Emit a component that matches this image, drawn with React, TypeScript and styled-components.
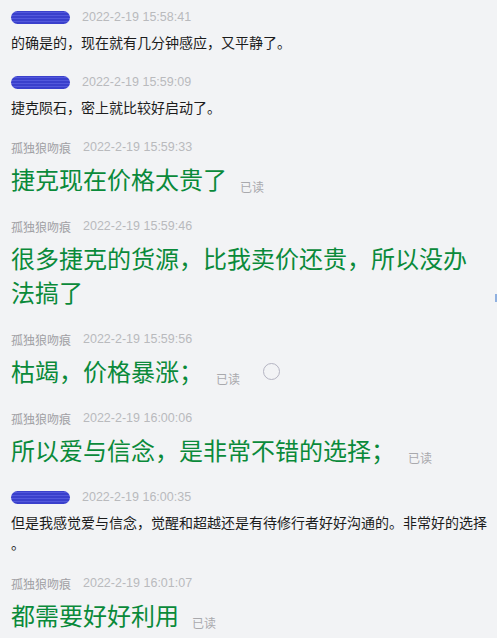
import React from 'react';
import styled, { createGlobalStyle } from 'styled-components';

const GlobalStyle = createGlobalStyle`
  html, body {
    margin: 0;
    padding: 0;
    background: #f2f3f5;
  }
  body {
    font-family: "Liberation Sans", "Noto Sans CJK SC", sans-serif;
  }
`;

const Page = styled.div`
  position: relative;
  width: 497px;
  min-height: 638px;
  box-sizing: border-box;
  padding: 7px 8px 0 11px;
  display: flex;
  flex-direction: column;
  gap: 18px;
  overflow: hidden;
`;

const Message = styled.div`
  display: flex;
  flex-direction: column;
  gap: 5px;
`;

const Header = styled.div`
  display: flex;
  align-items: center;
  gap: 12px;
  height: 20px;
`;

const Scribble = styled.span`
  display: inline-block;
  width: 59px;
  height: 13px;
  border-radius: 7px;
  background:
    repeating-linear-gradient(
      0deg,
      #3a40cc 0px,
      #3a40cc 2px,
      #5258dc 2px,
      #5258dc 3px
    );
`;

const Name = styled.span`
  font-family: "Noto Sans CJK SC", sans-serif;
  font-size: 12px;
  color: #a0a0a4;
`;

const Time = styled.span`
  font-family: "Liberation Sans", sans-serif;
  font-size: 12.5px;
  color: #b9babd;
`;

const Body = styled.div<{ $big?: boolean }>`
  font-family: "Noto Sans CJK SC", sans-serif;
  font-size: ${p => (p.$big ? '24px' : '14px')};
  line-height: ${p => (p.$big ? '34px' : '21px')};
  margin-bottom: ${p => (p.$big ? '2px' : '1px')};
  color: ${p => (p.$big ? '#0a8a3a' : '#1c1c1c')};
  word-break: break-all;
  line-break: anywhere;
`;

const Read = styled.span`
  font-family: "Noto Sans CJK SC", sans-serif;
  font-size: 12px;
  line-height: 12px;
  color: #a9a9ad;
  margin-left: 13px;
  vertical-align: -3px;
`;

const Ring = styled.span`
  display: inline-block;
  width: 15px;
  height: 15px;
  border: 1.5px solid #b4b4c2;
  border-radius: 50%;
  margin-left: 23px;
  vertical-align: 1px;
`;

const EdgeMark = styled.span`
  position: absolute;
  right: 0;
  top: 294px;
  width: 2px;
  height: 8px;
  background: #8fb0e0;
`;

type Msg = {
  who: 'blue' | 'name';
  time: string;
  text: string;
  big?: boolean;
  read?: boolean;
  ring?: boolean;
};

const messages: Msg[] = [
  { who: 'blue', time: '2022-2-19 15:58:41', text: '的确是的，现在就有几分钟感应，又平静了。' },
  { who: 'blue', time: '2022-2-19 15:59:09', text: '捷克陨石，密上就比较好启动了。' },
  { who: 'name', time: '2022-2-19 15:59:33', text: '捷克现在价格太贵了', big: true, read: true },
  { who: 'name', time: '2022-2-19 15:59:46', text: '很多捷克的货源，比我卖价还贵，所以没办法搞了', big: true },
  { who: 'name', time: '2022-2-19 15:59:56', text: '枯竭，价格暴涨；', big: true, read: true, ring: true },
  { who: 'name', time: '2022-2-19 16:00:06', text: '所以爱与信念，是非常不错的选择；', big: true, read: true },
  { who: 'blue', time: '2022-2-19 16:00:35', text: '但是我感觉爱与信念，觉醒和超越还是有待修行者好好沟通的。非常好的选择。' },
  { who: 'name', time: '2022-2-19 16:01:07', text: '都需要好好利用', big: true, read: true },
];

export default function App() {
  return (
    <>
      <GlobalStyle />
      <Page>
        {messages.map((m, i) => (
          <Message key={i}>
            <Header>
              {m.who === 'blue' ? <Scribble /> : <Name>孤独狼吻痕</Name>}
              <Time>{m.time}</Time>
            </Header>
            <Body $big={m.big}>
              {m.text}
              {m.read && <Read>已读</Read>}
              {m.ring && <Ring />}
            </Body>
          </Message>
        ))}
        <EdgeMark />
      </Page>
    </>
  );
}
